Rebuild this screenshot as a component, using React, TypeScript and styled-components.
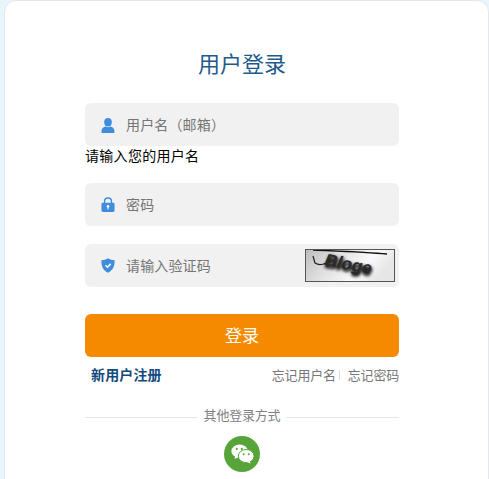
import React from "react";
import styled, { createGlobalStyle } from "styled-components";

const GlobalStyle = createGlobalStyle`
  html, body {
    margin: 0;
    padding: 0;
    height: 100%;
    overflow: hidden;
    background-color: #e8f5fd;
    font-family: "Noto Sans CJK SC", "Liberation Sans", sans-serif;
  }
  * {
    box-sizing: border-box;
  }
`;

const Page = styled.div`
  height: 479px;
  padding-left: 4px;
  overflow: hidden;
`;

const Card = styled.div`
  width: 485px;
  height: 520px;
  padding: 48px 0 0 80px;
  background-color: #ffffff;
  border: 1px solid #e4e8ea;
  border-radius: 12px;
`;

const Form = styled.form`
  width: 314px;
  display: flex;
  flex-direction: column;
`;

const Title = styled.h1`
  margin: 0 0 24px;
  height: 30px;
  line-height: 26px;
  font-size: 22px;
  font-weight: 400;
  text-align: center;
  color: #1f5a8c;
`;

const Field = styled.div<{ $gap: number }>`
  height: 43px;
  margin-bottom: ${(props) => props.$gap}px;
  padding: 0 5px 0 16px;
  display: flex;
  align-items: center;
  background-color: #f1f1f1;
  border-radius: 6px;
`;

const IconSlot = styled.span<{ $drop?: number }>`
  width: 25px;
  flex: none;
  padding-top: ${(props) => props.$drop || 0}px;
  display: flex;
  align-items: center;
`;

const Input = styled.input`
  flex: 1;
  min-width: 0;
  border: none;
  outline: none;
  padding: 0 0 2px;
  background: transparent;
  font-family: inherit;
  font-size: 14px;
  letter-spacing: 0.15px;
  color: #333333;
  &::placeholder {
    color: #757575;
    opacity: 1;
  }
`;

const ErrorText = styled.label`
  height: 20px;
  margin: -1px 0 18px;
  line-height: 20px;
  font-size: 14px;
  letter-spacing: 0.3px;
  color: #000000;
`;

const Captcha = styled.svg`
  width: 90px;
  height: 33px;
  flex: none;
  margin-right: -1px;
  border: 1px solid #555555;
`;

const SubmitButton = styled.button`
  height: 43px;
  padding: 0 0 2px;
  border: none;
  border-radius: 6px;
  background-color: #f58a00;
  color: #ffffff;
  font-family: inherit;
  font-size: 17px;
`;

const LinkRow = styled.div`
  margin-top: 7px;
  padding-left: 6px;
  height: 20px;
  display: flex;
  justify-content: space-between;
  align-items: center;
`;

const RegisterLink = styled.a`
  font-size: 14px;
  font-weight: 700;
  letter-spacing: 0.15px;
  color: #134a7c;
`;

const ForgotLinks = styled.div`
  display: flex;
  align-items: center;
`;

const ForgotLink = styled.a`
  font-size: 13px;
  letter-spacing: -0.2px;
  color: #777777;
`;

const Separator = styled.span`
  width: 1px;
  height: 10px;
  margin: 1px 8px 0 3px;
  background-color: #dddddd;
`;

const Divider = styled.div`
  margin-top: 21px;
  display: flex;
  align-items: center;
  gap: 6px;
  font-size: 13px;
  letter-spacing: -0.2px;
  color: #808080;
  &::before,
  &::after {
    content: "";
    flex: 1;
    height: 1px;
    background-color: #e6e6e6;
  }
`;

const DividerLabel = styled.span`
  line-height: 20px;
  padding-bottom: 4px;
`;

const SocialRow = styled.div`
  margin-top: 7px;
  display: flex;
  justify-content: center;
`;

const WechatBadge = styled.a`
  width: 36px;
  height: 36px;
  border-radius: 50%;
  background-color: #57a53a;
  display: flex;
  align-items: center;
  justify-content: center;
`;

const UserIcon = () => (
  <svg width="14" height="15" viewBox="0 0 14 15" fill="#3f8ddc">
    <ellipse cx="7" cy="4.2" rx="3.8" ry="4.2" />
    <path d="M0.6 15 C0 11.4 1.8 9.2 4.6 8.6 C6 9.6 8 9.6 9.4 8.6 C12.2 9.2 14 11.4 13.4 15 Z" />
  </svg>
);

const LockIcon = () => (
  <svg width="14" height="15" viewBox="0 0 15 16">
    <path d="M3.8 7 V4.6 C3.8 2.4 5.4 1 7.5 1 C9.6 1 11.2 2.4 11.2 4.6 V7" fill="none" stroke="#3f8ddc" strokeWidth="1.5" />
    <rect x="0.5" y="6" width="14" height="10" rx="1.5" fill="#3f8ddc" />
    <circle cx="7.5" cy="10" r="1.4" fill="#ffffff" />
    <rect x="6.9" y="10" width="1.2" height="3.2" fill="#ffffff" />
  </svg>
);

const ShieldIcon = () => (
  <svg width="14" height="15" viewBox="0 0 14 15">
    <path d="M7 0.3 C8.8 1.6 11 2.2 13.6 2.3 C13.9 8 12 12.4 7 14.8 C2 12.4 0.1 8 0.4 2.3 C3 2.2 5.2 1.6 7 0.3 Z" fill="#3f8ddc" />
    <path d="M4.5 7.3 L6.4 9.2 L9.7 5.9" fill="none" stroke="#ffffff" strokeWidth="1.5" />
  </svg>
);

const WechatIcon = () => (
  <svg width="23" height="20" viewBox="0 0 28 24">
    <ellipse cx="10.5" cy="8.5" rx="10" ry="8" fill="#ffffff" />
    <path d="M5 14 L4.4 18.2 L9.5 15.4 Z" fill="#ffffff" />
    <ellipse cx="18.5" cy="14.5" rx="9.6" ry="8" fill="#ffffff" stroke="#57a53a" strokeWidth="1.2" />
    <path d="M22.6 20.6 L24 23.6 L19 21.8 Z" fill="#ffffff" />
    <circle cx="7" cy="5.8" r="1.3" fill="#57a53a" />
    <circle cx="13.2" cy="5.8" r="1.3" fill="#57a53a" />
    <circle cx="15.4" cy="12.4" r="1.2" fill="#57a53a" />
    <circle cx="21.6" cy="12.4" r="1.2" fill="#57a53a" />
  </svg>
);

const CaptchaImage = () => (
  <Captcha viewBox="0 0 88 31">
    <defs>
      <linearGradient id="captchaBg" x1="0" y1="0" x2="1" y2="0.3">
        <stop offset="0" stopColor="#bcbcbc" />
        <stop offset="0.35" stopColor="#dedede" />
        <stop offset="0.75" stopColor="#fafafa" />
        <stop offset="1" stopColor="#e6e6e6" />
      </linearGradient>
      <filter id="captchaShadow" x="-20%" y="-60%" width="140%" height="220%">
        <feGaussianBlur stdDeviation="1.8" />
      </filter>
    </defs>
    <rect width="88" height="31" fill="url(#captchaBg)" />
    <path d="M7 0 C30 1 60 2 81 4" fill="none" stroke="#111111" strokeWidth="1.3" />
    <path d="M7 6 L9 13 C12 15 16 15 20 13" fill="none" stroke="#222222" strokeWidth="1.2" />
    <text x="19" y="22" fontFamily="Liberation Sans" fontSize="17" fontWeight="700" fontStyle="italic" fill="#000000" stroke="#000000" strokeWidth="1" filter="url(#captchaShadow)" transform="rotate(11 44 18)">Bloge</text>
    <text x="18" y="20" fontFamily="Liberation Sans" fontSize="17" fontWeight="700" fontStyle="italic" fill="#2a2a2a" transform="rotate(11 44 18)">Bloge</text>
  </Captcha>
);

function App() {
  return (
    <Page>
      <GlobalStyle />
      <Card>
        <Form onSubmit={(event) => event.preventDefault()}>
          <Title>用户登录</Title>
          <Field $gap={0}>
            <IconSlot $drop={2}>
              <UserIcon />
            </IconSlot>
            <Input placeholder="用户名（邮箱）" />
          </Field>
          <ErrorText>请输入您的用户名</ErrorText>
          <Field $gap={18}>
            <IconSlot>
              <LockIcon />
            </IconSlot>
            <Input type="password" placeholder="密码" />
          </Field>
          <Field $gap={27}>
            <IconSlot>
              <ShieldIcon />
            </IconSlot>
            <Input placeholder="请输入验证码" />
            <CaptchaImage />
          </Field>
          <SubmitButton type="submit">登录</SubmitButton>
          <LinkRow>
            <RegisterLink>新用户注册</RegisterLink>
            <ForgotLinks>
              <ForgotLink>忘记用户名</ForgotLink>
              <Separator />
              <ForgotLink>忘记密码</ForgotLink>
            </ForgotLinks>
          </LinkRow>
          <Divider>
            <DividerLabel>其他登录方式</DividerLabel>
          </Divider>
          <SocialRow>
            <WechatBadge>
              <WechatIcon />
            </WechatBadge>
          </SocialRow>
        </Form>
      </Card>
    </Page>
  );
}

export default App;
